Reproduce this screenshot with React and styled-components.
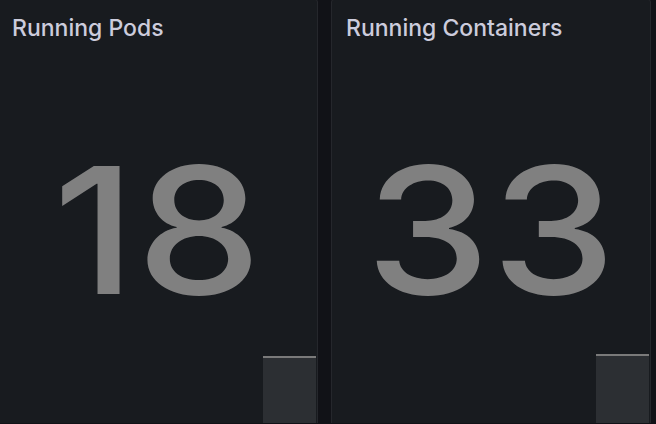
import React from 'react'
import styled, { createGlobalStyle } from 'styled-components'

const GlobalStyle = createGlobalStyle`
  html, body {
    margin: 0;
    padding: 0;
    background: #111217;
    overflow: hidden;
  }
`

const Dashboard = styled.div`
  display: flex;
  gap: 13px;
  width: 656px;
  height: 424px;
  overflow: hidden;
  margin-top: -1px;
  font-family: Inter, 'Noto Sans', sans-serif;
`

const Panel = styled.div`
  position: relative;
  flex: 0 0 ${(props) => props.width}px;
  height: 440px;
  background: #181b1f;
  border: 1px solid #25272c;
  border-radius: 3px;
  box-sizing: border-box;
  display: flex;
  flex-direction: column;
  margin-left: ${(props) => (props.first ? '-3px' : '0')};
`

const Title = styled.h2`
  margin: 0;
  padding: 13px 0 0 14px;
  font-size: 23px;
  font-weight: 500;
  line-height: 30px;
  color: #ccccdc;
`

const Value = styled.div`
  display: flex;
  justify-content: center;
  padding-top: 99px;
  font-size: 176px;
  font-weight: 500;
  line-height: 1;
  color: #808080;
`

const Digits = styled.span`
  display: inline-block;
  transform: scaleX(1.13);
  letter-spacing: 1px;
`

const Spark = styled.svg`
  position: absolute;
  right: 1px;
  top: ${(props) => props.top}px;
`

const StatPanel = ({ title, value, width, sparkTop, first }) => (
  <Panel width={width} first={first}>
    <Title>{title}</Title>
    <Value>
      <Digits>{value}</Digits>
    </Value>
    <Spark top={sparkTop} width="53" height="90" viewBox="0 0 53 90">
      <rect x="0" y="0" width="53" height="90" fill="#2c2f33" />
      <rect x="0" y="0" width="53" height="2" fill="#7a7a7a" />
    </Spark>
  </Panel>
)

const App = () => (
  <>
    <GlobalStyle />
    <Dashboard>
      <StatPanel first title="Running Pods" value="18" width={321} sparkTop={356} />
      <StatPanel title="Running Containers" value="33" width={320} sparkTop={354} />
    </Dashboard>
  </>
)

export default App
